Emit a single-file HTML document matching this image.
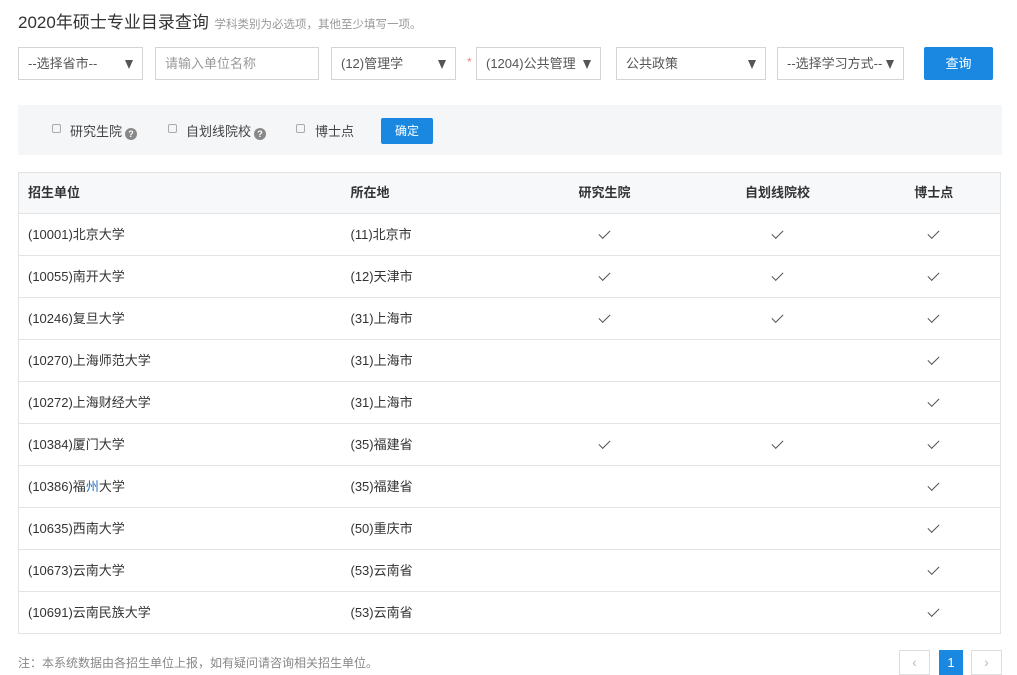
<!DOCTYPE html>
<html><head><meta charset="utf-8"><style>
*{box-sizing:border-box;margin:0;padding:0}
body{width:1017px;height:675px;background:#fff;font-family:"Liberation Sans","Noto Sans CJK SC",sans-serif;color:#333;position:relative;overflow:hidden;font-size:13px}
.a{position:absolute}
.sel{position:absolute;top:47px;height:33px;border:1px solid #d4d4d4;background:#fff;font-size:13px;color:#555;line-height:31px;padding-left:9px}
.sel .tri{position:absolute;right:9px;top:12px;width:0;height:0;border-left:4px solid transparent;border-right:4px solid transparent;border-top:9px solid #555}
.cb{position:absolute;top:124px;width:9px;height:9px;border:1px solid #aaa;border-radius:2px;background:#f5f5f5}
.q{display:inline-block;width:12px;height:12px;border-radius:50%;background:#888;color:#fff;font-size:9px;line-height:12px;text-align:center;font-weight:bold;vertical-align:-1px;margin-left:3px}
table{position:absolute;left:18px;top:172px;width:983px;border-collapse:collapse;border:1px solid #e3e3e3}
td,th{height:42px;border-bottom:1px solid #e3e3e3;font-size:13px;color:#333;font-weight:normal;padding-left:9px;padding-bottom:3px;text-align:left}
th{font-weight:bold;background:#f7f8fa;height:41px}
.c{text-align:center;padding-left:0}
.ck{display:inline-block;width:11px;height:6px;border-left:1.2px solid #555;border-bottom:1.2px solid #555;transform:rotate(-45deg);vertical-align:middle;position:relative;top:-1px}
.pg{position:absolute;top:650px;height:25px;border:1px solid #ddd;color:#bbb;text-align:center;line-height:23px;font-size:14px}
</style></head><body>
<div class="a" style="left:18px;top:8px;font-size:17px;color:#333">2020年硕士专业目录查询 <span style="font-size:11.5px;color:#999;margin-left:1px">学科类别为必选项，其他至少填写一项。</span></div>
<div class="sel" style="left:18px;width:125px">--选择省市--<span class="tri"></span></div>
<div class="sel" style="left:155px;width:164px;color:#999">请输入单位名称</div>
<div class="sel" style="left:331px;width:125px">(12)管理学<span class="tri"></span></div>
<div class="a" style="left:467px;top:55px;color:#f08080;font-size:12px">*</div>
<div class="sel" style="left:476px;width:125px">(1204)公共管理<span class="tri"></span></div>
<div class="sel" style="left:616px;width:150px">公共政策<span class="tri"></span></div>
<div class="sel" style="left:777px;width:127px">--选择学习方式--<span class="tri"></span></div>
<div class="a" style="left:924px;top:47px;width:69px;height:33px;background:#1a88e0;color:#fff;text-align:center;line-height:33px;border-radius:2px">查询</div>
<div class="a" style="left:18px;top:105px;width:984px;height:50px;background:#f5f6f8"></div>
<div class="cb" style="left:52px"></div><div class="a" style="left:70px;top:121px;color:#444">研究生院<span class="q">?</span></div>
<div class="cb" style="left:168px"></div><div class="a" style="left:186px;top:121px;color:#444">自划线院校<span class="q">?</span></div>
<div class="cb" style="left:296px"></div><div class="a" style="left:315px;top:121px;color:#444">博士点</div>
<div class="a" style="left:381px;top:118px;width:52px;height:26px;background:#1a88e0;color:#fff;text-align:center;line-height:26px;border-radius:2px;font-size:12px">确定</div>
<table>
<tr><th style="width:323px">招生单位</th><th style="width:180px">所在地</th><th class="c" style="width:166px">研究生院</th><th class="c" style="width:180px">自划线院校</th><th class="c">博士点</th></tr>
<tr><td>(10001)北京大学</td><td>(11)北京市</td><td class="c"><i class="ck"></i></td><td class="c"><i class="ck"></i></td><td class="c"><i class="ck"></i></td></tr>
<tr><td>(10055)南开大学</td><td>(12)天津市</td><td class="c"><i class="ck"></i></td><td class="c"><i class="ck"></i></td><td class="c"><i class="ck"></i></td></tr>
<tr><td>(10246)复旦大学</td><td>(31)上海市</td><td class="c"><i class="ck"></i></td><td class="c"><i class="ck"></i></td><td class="c"><i class="ck"></i></td></tr>
<tr><td>(10270)上海师范大学</td><td>(31)上海市</td><td></td><td></td><td class="c"><i class="ck"></i></td></tr>
<tr><td>(10272)上海财经大学</td><td>(31)上海市</td><td></td><td></td><td class="c"><i class="ck"></i></td></tr>
<tr><td>(10384)厦门大学</td><td>(35)福建省</td><td class="c"><i class="ck"></i></td><td class="c"><i class="ck"></i></td><td class="c"><i class="ck"></i></td></tr>
<tr><td>(10386)福<span style="color:#1a6fc0">州</span>大学</td><td>(35)福建省</td><td></td><td></td><td class="c"><i class="ck"></i></td></tr>
<tr><td>(10635)西南大学</td><td>(50)重庆市</td><td></td><td></td><td class="c"><i class="ck"></i></td></tr>
<tr><td>(10673)云南大学</td><td>(53)云南省</td><td></td><td></td><td class="c"><i class="ck"></i></td></tr>
<tr><td>(10691)云南民族大学</td><td>(53)云南省</td><td></td><td></td><td class="c"><i class="ck"></i></td></tr>
</table>
<div class="a" style="left:18px;top:654px;font-size:12px;color:#888">注：本系统数据由各招生单位上报，如有疑问请咨询相关招生单位。</div>
<div class="pg" style="left:899px;width:31px">&#x2039;</div>
<div class="pg" style="left:939px;width:24px;background:#1a88e0;border-color:#1a88e0;color:#fff;font-size:13px">1</div>
<div class="pg" style="left:971px;width:31px">&#x203A;</div>
</body></html>
